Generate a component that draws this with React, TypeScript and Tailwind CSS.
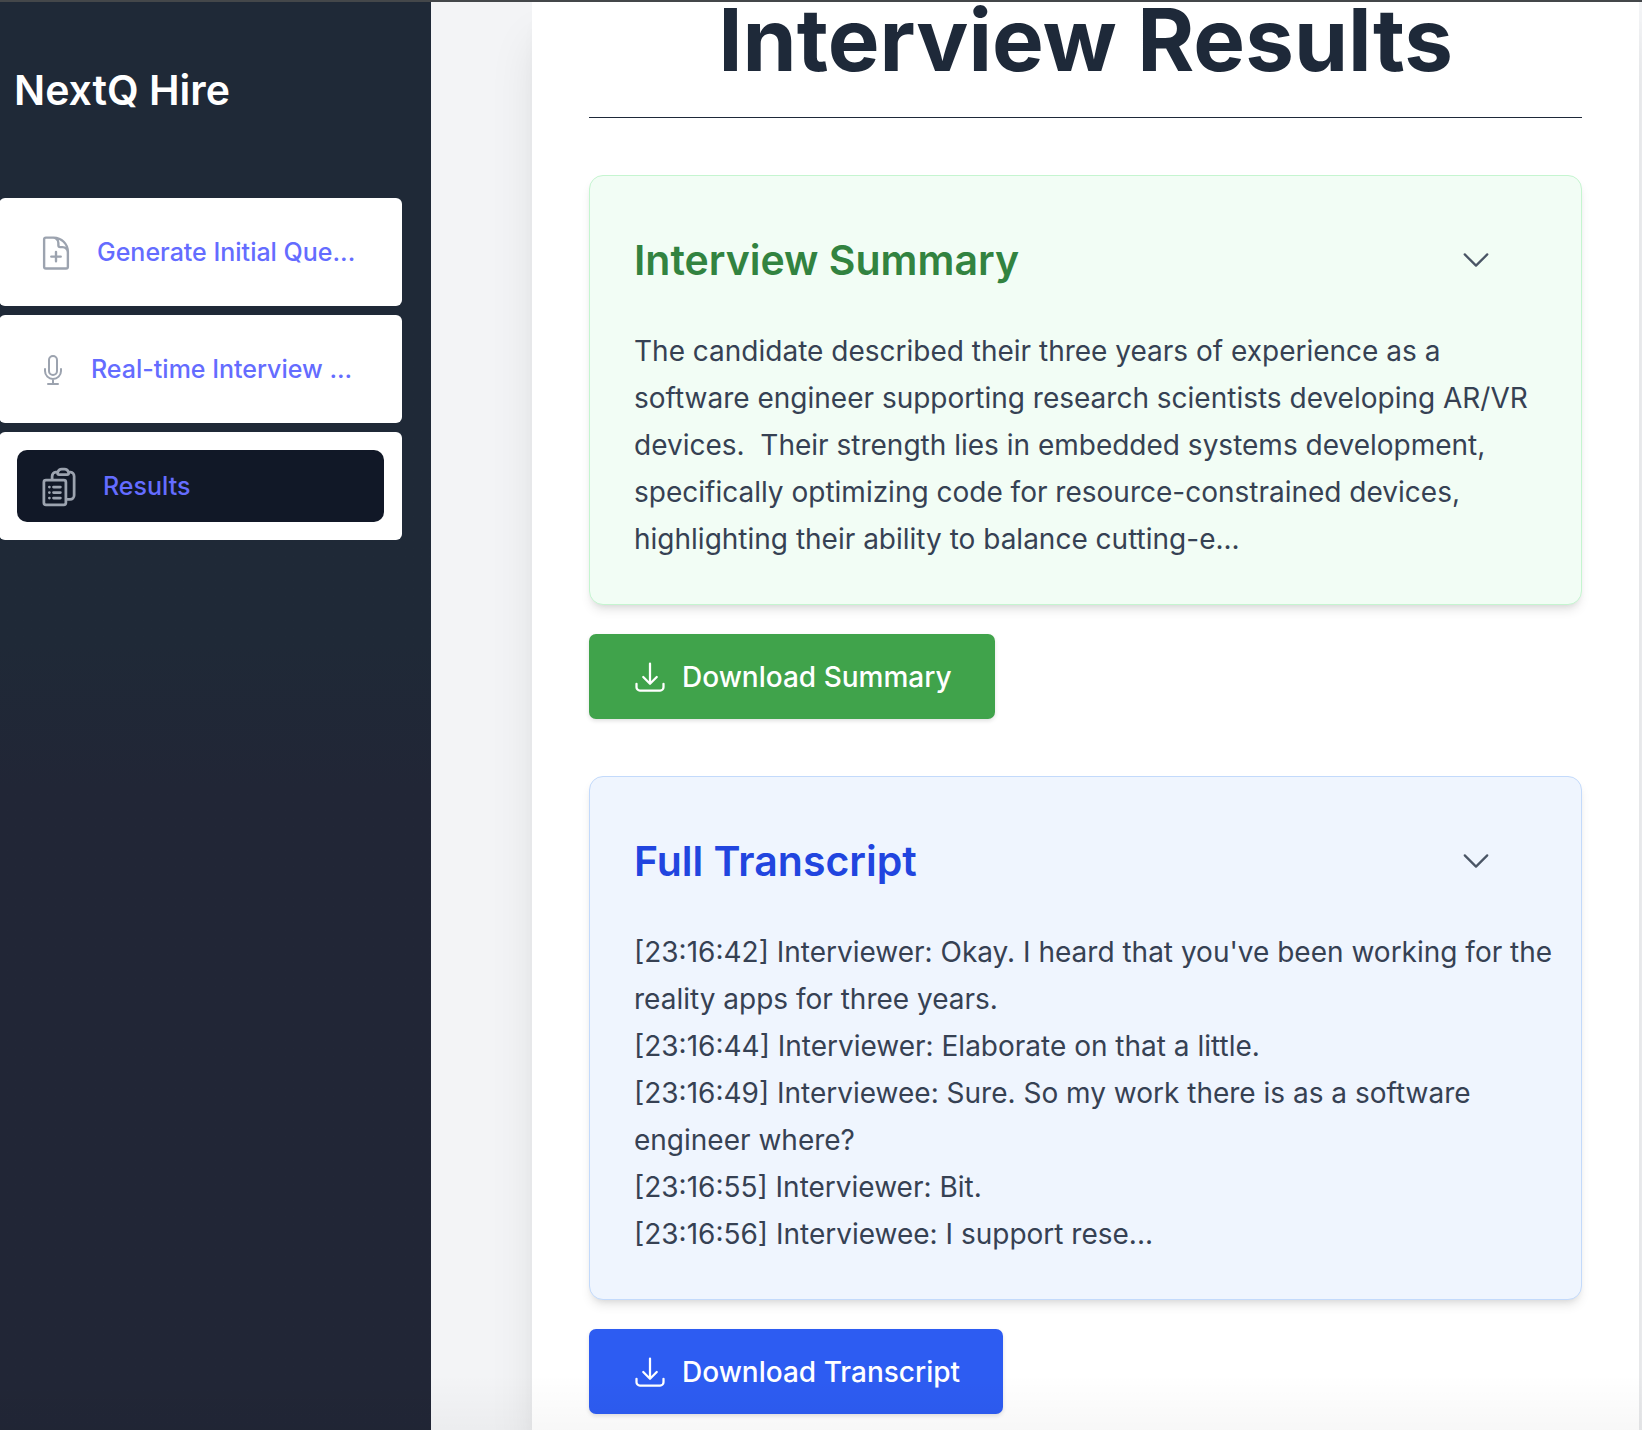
import { useState } from "react";
import {
  HiOutlineDocumentPlus,
  HiOutlineMicrophone,
  HiOutlineClipboardDocumentList,
  HiOutlineArrowDownTray,
  HiOutlineChevronDown,
} from "react-icons/hi2";

const summary =
  "The candidate described their three years of experience as a software engineer supporting research scientists developing AR/VR devices.\u00a0 Their strength lies in embedded systems development, specifically optimizing code for resource-constrained devices, highlighting their ability to balance cutting-e...";

const transcript = [
  "[23:16:42] Interviewer: Okay. I heard that you've been working for the reality apps for three years.",
  "[23:16:44] Interviewer: Elaborate on that a little.",
  "[23:16:49] Interviewee: Sure. So my work there is as a software engineer where?",
  "[23:16:55] Interviewer: Bit.",
  "[23:16:56] Interviewee: I support rese...",
];

const navItems = [
  { label: "Generate Initial Que...", Icon: HiOutlineDocumentPlus, size: "size-[38px]", active: false },
  { label: "Real-time Interview ...", Icon: HiOutlineMicrophone, size: "size-8", active: false },
  { label: "Results", Icon: HiOutlineClipboardDocumentList, size: "size-11", active: true },
];

function Sidebar() {
  return (
    <aside className="w-[431px] shrink-0 bg-linear-to-b from-[#1f2937] from-45% to-[#212636] to-55% pt-[60px]">
      <h2 className="px-3.5 text-[41px] leading-[56px] font-semibold text-white">NextQ Hire</h2>
      <nav className="-ml-px mt-20 mr-[29px] flex flex-col gap-[9px]">
        {navItems.map(({ label, Icon, size, active }) => (
          <div key={label} className="rounded-md bg-white p-[18px]">
            <a
              href="#"
              aria-current={active ? "page" : undefined}
              className={`flex h-[72px] items-center gap-[22px] rounded-[10px] px-5 pt-px text-[25px] font-medium whitespace-nowrap text-[#646cff] ${active ? "bg-[#111827]" : ""}`}
            >
              <Icon className={`${size} shrink-0 text-[#9ca3af]`} />
              {label}
            </a>
          </div>
        ))}
      </nav>
    </aside>
  );
}

type SectionProps = {
  title: string;
  lines: string[];
  card: string;
  heading: string;
  button: string;
  action: string;
};

function Section({ title, lines, card, heading, button, action }: SectionProps) {
  const [open, setOpen] = useState(true);
  return (
    <section className="mt-[57px]">
      <div className={`rounded-[14px] border pt-11 pr-6 pb-[41px] pl-11 shadow-[0_7px_11px_-2px_rgba(0,0,0,0.1),0_4px_7px_-4px_rgba(0,0,0,0.1)] ${card}`}>
        <div className="flex h-20 items-center justify-between pr-5">
          <h2 className={`text-[41px] leading-[56px] font-semibold ${heading}`}>{title}</h2>
          <button type="button" aria-label={`Toggle ${title}`} onClick={() => setOpen(!open)} className="px-[43px] text-gray-600">
            <HiOutlineChevronDown className="size-9" />
          </button>
        </div>
        {open && (
          <div className="mt-7 text-[28px] leading-[47px] text-gray-700">
            {lines.map((line) => (
              <p key={line}>{line}</p>
            ))}
          </div>
        )}
      </div>
      <button
        type="button"
        className={`mt-[29px] flex h-[85px] items-center gap-3.5 rounded-[7px] px-[43px] text-[28px] font-medium text-white shadow-[0_2px_4px_rgba(0,0,0,0.12)] ${button}`}
      >
        <HiOutlineArrowDownTray className="size-9" />
        {action}
      </button>
    </section>
  );
}

export default function App() {
  return (
    <div className="relative flex min-h-screen flex-col border-t-2 border-[#44474a] bg-[#f3f4f6] font-['Inter',sans-serif]">
      <div className="flex flex-1 overflow-clip">
        <Sidebar />
        <div className="flex-1 pr-[3px] pl-[101px]">
          <main className="h-full bg-white px-[57px] shadow-[0_36px_45px_-5px_rgba(0,0,0,0.1),0_14px_18px_-8px_rgba(0,0,0,0.06)]">
            <h1 className="border-b border-gray-800 pb-10 text-center text-[87px] leading-[75px] font-bold text-gray-800">
              Interview Results
            </h1>
            <Section
              title="Interview Summary"
              lines={[summary]}
              card="border-[#c5f5d0] bg-[#f2fdf5]"
              heading="text-[#328340]"
              button="bg-[#40a34b]"
              action="Download Summary"
            />
            <Section
              title="Full Transcript"
              lines={transcript}
              card="border-[#c3dafb] bg-[#eff5fe]"
              heading="text-[#2145df]"
              button="bg-[#2d5cf2]"
              action="Download Transcript"
            />
          </main>
        </div>
      </div>
      <div className="pointer-events-none absolute inset-x-0 bottom-0 h-14 bg-linear-to-b from-transparent to-black/3" />
    </div>
  );
}
